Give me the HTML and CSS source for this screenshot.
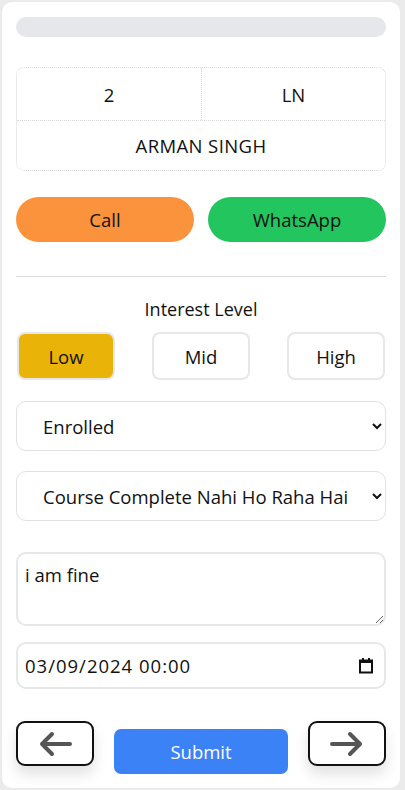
FILE: index.html
```html
<!DOCTYPE html>
<html>
<head>
<meta charset="utf-8">
<link rel="stylesheet" href="styles.css">
</head>
<body>
<div class="card">
  <div class="progress"></div>
  <div class="info">
    <div class="cell">2</div>
    <div class="cell right">LN</div>
    <div class="cell full">ARMAN SINGH</div>
  </div>
  <div class="actions">
    <button class="pill call">Call</button>
    <button class="pill wa">WhatsApp</button>
  </div>
  <hr class="divider">
  <div class="label">Interest Level</div>
  <div class="levels">
    <button class="lvl active">Low</button>
    <button class="lvl">Mid</button>
    <button class="lvl">High</button>
  </div>
  <select class="field sel">
    <option>Enrolled</option>
  </select>
  <select class="field sel">
    <option>Course Complete Nahi Ho Raha Hai</option>
  </select>
  <textarea class="field note" spellcheck="false">i am fine</textarea>
  <div class="field date">
    <input class="date-text" type="text" value="03/09/2024 00:00">
    <svg class="cal" width="16" height="17" viewBox="0 0 16 17"><path d="M2 3.5h12v12H2z" fill="none" stroke="#111" stroke-width="2"/><path d="M2 4h12v2H2z" fill="#111"/><path d="M5 1v3M11 1v3" stroke="#111" stroke-width="2"/></svg>
  </div>
  <div class="nav">
    <button class="navbtn" aria-label="Previous">
      <svg width="34" height="26" viewBox="0 0 34 26"><path d="M32 13H4 M14 3L4 13l10 10" fill="none" stroke="#555" stroke-width="4" stroke-linecap="round" stroke-linejoin="round"/></svg>
    </button>
    <button class="submit">Submit</button>
    <button class="navbtn" aria-label="Next">
      <svg width="34" height="26" viewBox="0 0 34 26"><path d="M2 13H30 M20 3l10 10-10 10" fill="none" stroke="#555" stroke-width="4" stroke-linecap="round" stroke-linejoin="round"/></svg>
    </button>
  </div>
</div>
</body>
</html>
```
FILE: styles.css
```css
* { box-sizing: border-box; }
html, body { margin: 0; padding: 0; }
body {
  background: #ebebeb;
  font-family: "Open Sans", "Noto Sans", sans-serif;
  color: #111;
  padding: 2px 5px 2px 2px;
  height: 790px;
}
.card {
  background: #fff;
  border-radius: 10px;
  height: 786px;
  padding: 15px 14px 0 14px;
  display: flex;
  flex-direction: column;
}
.progress {
  height: 20px;
  border-radius: 10px;
  background: #e5e7eb;
}
.info {
  margin-top: 30px;
  border: 1px dotted #d6d8db;
  border-radius: 8px;
  display: grid;
  grid-template-columns: 1fr 1fr;
  font-size: 18.5px;
}
.cell {
  height: 52px;
  display: flex;
  align-items: center;
  justify-content: center;
}
.cell.right { border-left: 1px dotted #d6d8db; }
.cell.full {
  grid-column: 1 / 3;
  height: 50px;
  border-top: 1px dotted #d6d8db;
  letter-spacing: 0.4px;
}
.actions {
  margin-top: 26px;
  display: flex;
  gap: 14px;
}
.pill {
  flex: 1;
  height: 45px;
  border: none;
  border-radius: 23px;
  font-family: inherit;
  font-size: 18.5px;
  color: #111;
}
.call { background: #fb923c; }
.wa { background: #22c55e; }
.divider {
  margin: 34px 0 0 0;
  border: none;
  border-top: 1px solid #d9dadd;
}
.label {
  margin-top: 20px;
  text-align: center;
  font-size: 18px;
  line-height: 24px;
}
.levels {
  margin-top: 11px;
  display: flex;
  justify-content: space-between;
  padding: 0 1px;
}
.lvl {
  width: 98px;
  height: 48px;
  border: 2px solid #e5e7eb;
  border-radius: 8px;
  background: #fff;
  font-family: inherit;
  font-size: 18.5px;
  color: #111;
}
.lvl.active { background: #eab308; }
.field {
  width: 100%;
  border: 1px solid #dfe1e5;
  border-radius: 10px;
  background: #fff;
  font-family: inherit;
  font-size: 18.5px;
  color: #111;
}
.sel {
  margin-top: 21px;
  height: 50px;
  padding: 0 8px 0 22px;
}
.sel + .sel { margin-top: 20px; }
.note {
  margin-top: 31px;
  height: 74px;
  padding: 8px 7px;
  border-width: 2px;
  border-color: #e5e7eb;
  resize: vertical;
}
.date {
  margin-top: 16px;
  height: 47px;
  padding: 0 10px 0 7px;
  border-width: 2px;
  border-color: #e5e7eb;
  display: flex;
  align-items: center;
}
.date-text {
  flex: 1;
  min-width: 0;
  border: none;
  outline: none;
  padding: 0;
  font-family: inherit;
  font-size: 18.5px;
  letter-spacing: 1px;
  color: #111;
  background: transparent;
}
.cal { flex: none; }
.nav {
  margin-top: 32px;
  display: flex;
  justify-content: space-between;
  align-items: flex-start;
}
.navbtn {
  width: 78px;
  height: 45px;
  border: 2px solid #111;
  border-radius: 9px;
  background: #fff;
  display: flex;
  align-items: center;
  justify-content: center;
  box-shadow: 0 8px 14px rgba(0,0,0,0.12);
  padding: 0;
}
.submit {
  margin-top: 8px;
  width: 174px;
  height: 45px;
  border: none;
  border-radius: 7px;
  background: #3b82f6;
  color: #fff;
  font-family: inherit;
  font-size: 18.5px;
}
```
